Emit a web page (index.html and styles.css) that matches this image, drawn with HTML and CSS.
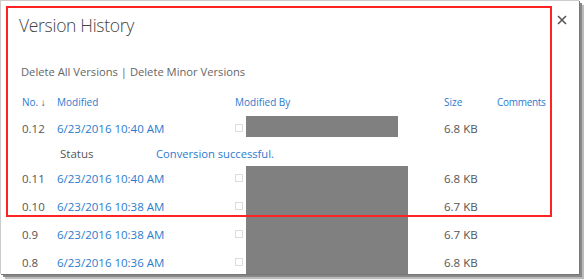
FILE: index.html
```html
<!DOCTYPE html>
<html lang="en">
<head>
    <meta charset="UTF-8">
    <title>Version History</title>
    <link rel="stylesheet" href="styles.css">
</head>
<body>
    <div class="dialog">
        <div class="head">
            <h1>Version History</h1>
            <svg class="close" width="10" height="10" viewBox="0 0 10 10">
                <path d="M1 1L9 9M9 1L1 9" stroke="#555" stroke-width="1.6"/>
            </svg>
        </div>
        <div class="actions">
            <a>Delete All Versions</a> | <a>Delete Minor Versions</a>
        </div>
        <div class="versions">
            <div class="row th">
                <span>No. <span class="arrow">&#x2193;</span></span>
                <span>Modified</span>
                <span>Modified By</span>
                <span>Size</span>
                <span class="comments">Comments</span>
            </div>
            <div class="row">
                <span>0.12</span>
                <span class="link">6/23/2016 10:40 AM</span>
                <span><i class="check"></i></span>
                <span>6.8 KB</span>
                <span></span>
            </div>
            <div class="status">
                <span class="label">Status</span>
                <span class="link">Conversion successful.</span>
            </div>
            <div class="row">
                <span>0.11</span>
                <span class="link">6/23/2016 10:40 AM</span>
                <span><i class="check"></i></span>
                <span>6.8 KB</span>
                <span></span>
            </div>
            <div class="row">
                <span>0.10</span>
                <span class="link">6/23/2016 10:38 AM</span>
                <span><i class="check"></i></span>
                <span>6.7 KB</span>
                <span></span>
            </div>
            <div class="row">
                <span>0.9</span>
                <span class="link">6/23/2016 10:38 AM</span>
                <span><i class="check"></i></span>
                <span>6.7 KB</span>
                <span></span>
            </div>
            <div class="row">
                <span>0.8</span>
                <span class="link">6/23/2016 10:36 AM</span>
                <span><i class="check"></i></span>
                <span>6.8 KB</span>
                <span></span>
            </div>
        </div>

        <!-- redacted names -->
        <div class="redact r1"></div>
        <div class="redact r2"></div>
        <!-- annotation box -->
        <div class="mark"></div>
    </div>
</body>
</html>
```

FILE: styles.css
```css
* {
    margin: 0;
    padding: 0;
    box-sizing: border-box;
}

body {
    font-family: "Open Sans", Arial, sans-serif;
    background: #fff;
    width: 584px;
    height: 280px;
    overflow: hidden;
}

.dialog {
    position: relative;
    width: 579px;
    height: 274px;
    background: #fff;
    border-top: 1px solid #ccc;
    border-left: 1px solid #ccc;
    box-shadow: 1px 1px 0 #777, 3px 3px 0 #888, 5px 5px 1px #bbb;
    overflow: hidden;
}

.head {
    display: flex;
    justify-content: space-between;
    padding: 12px 12px 0 18px;
    height: 42px;
}

.head h1 {
    font-size: 17.5px;
    font-weight: 300;
    color: #444;
    letter-spacing: -0.3px;
}

.close {
    margin-top: 2px;
}

.actions {
    padding: 21px 0 0 20px;
    height: 47px;
    font-size: 11.2px;
    color: #666;
}

.versions {
    padding-left: 21px;
    font-size: 11.5px;
    color: #555;
}

.row {
    display: grid;
    grid-template-columns: 35px 178px 209px 53px auto;
    align-items: center;
    height: 28px;
}

.row.th {
    height: 24px;
    color: #2b7bd0;
    font-size: 10px;
}

.th .comments {
    letter-spacing: -0.3px;
}

.arrow {
    color: #444;
    font-size: 10px;
}

.link {
    color: #2b7bd0;
}

.check {
    display: block;
    width: 8px;
    height: 8px;
    border: 1px solid #ddd;
}

.status {
    display: flex;
    align-items: center;
    height: 22px;
    padding-left: 38px;
}

.status .label {
    width: 96px;
}

.status .link {
    font-size: 11.2px;
}

.redact {
    position: absolute;
    background: #808080;
}

.r1 {
    left: 245px;
    top: 115px;
    width: 152px;
    height: 21px;
}

.r2 {
    left: 245px;
    top: 165px;
    width: 162px;
    height: 120px;
}

.mark {
    position: absolute;
    left: 5px;
    top: 5px;
    width: 546px;
    height: 211px;
    border: 2px solid #f22;
}
```
